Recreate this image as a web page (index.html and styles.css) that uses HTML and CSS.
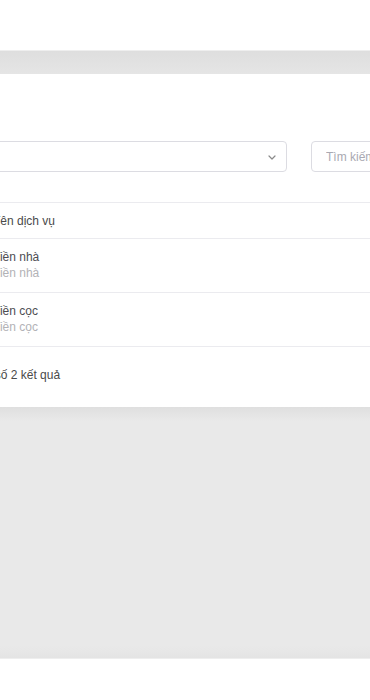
FILE: index.html
```html
<!DOCTYPE html>
<html lang="vi">
<head>
<meta charset="utf-8">
<link rel="stylesheet" href="styles.css">
</head>
<body>
<div class="viewport">
  <header class="topbar"></header>
  <div class="band"></div>
  <main class="canvas">
    <section class="card">
      <div class="filters">
        <div class="select">
          <svg class="chev" width="8" height="5" viewBox="0 0 8 5"><polyline points="1,1 4,4 7,1" fill="none" stroke="#8a8a8a" stroke-width="1.2" stroke-linecap="round" stroke-linejoin="round"/></svg>
        </div>
        <input class="search" type="text" placeholder="Tìm kiếm">
      </div>
      <div class="table">
        <div class="row head"><span class="cell">Tên dịch vụ</span></div>
        <div class="row item"><div class="cell"><div class="name">Tiền nhà</div><div class="desc">Tiền nhà</div></div></div>
        <div class="row item"><div class="cell"><div class="name">Tiền cọc</div><div class="desc">Tiền cọc</div></div></div>
        <div class="row foot"><span class="total">Tổng số 2 kết quả</span></div>
      </div>
    </section>
  </main>
  <div class="empty"></div>
  <footer class="bottom"></footer>
</div>
</body>
</html>
```

FILE: styles.css
```css
html, body {
  margin: 0;
  padding: 0;
  background: #ffffff;
}
body {
  font-family: "Liberation Sans", Arial, sans-serif;
  font-size: 12px;
  color: #4a4a4a;
  width: 370px;
  height: 700px;
  overflow: hidden;
}
.viewport {
  width: 370px;
  height: 700px;
  overflow: hidden;
  display: flex;
  flex-direction: column;
}
.topbar {
  height: 50px;
  flex: none;
  background: #ffffff;
}
.band {
  height: 23px;
  flex: none;
  border-top: 1px solid #eeeeee;
  background: linear-gradient(#dedede, #e5e5e5);
}
.canvas {
  flex: none;
  width: 800px;
  margin-left: -200px;
}
.card {
  background: #ffffff;
  height: 333px;
  display: flex;
  flex-direction: column;
}
.filters {
  display: flex;
  gap: 24px;
  padding: 67px 0 0 100px;
  margin-bottom: 30px;
}
.select {
  width: 375px;
  height: 29px;
  border: 1px solid #dcdce2;
  border-radius: 4px;
  display: flex;
  align-items: center;
  justify-content: flex-end;
  padding-right: 10px;
  box-sizing: content-box;
}
.chev {
  display: block;
  margin-top: 1px;
}
.search {
  width: 240px;
  height: 31px;
  box-sizing: border-box;
  border: 1px solid #dcdce2;
  border-radius: 4px;
  padding: 0 0 0 14px;
  font-family: "Liberation Sans", Arial, sans-serif;
  font-size: 12px;
  color: #4a4a4a;
  outline: none;
  background: #ffffff;
}
.search::placeholder {
  color: #a9a9b2;
}
.row {
  border-top: 1px solid #ebebef;
  display: flex;
  align-items: center;
}
.cell {
  padding-left: 193px;
}
.head {
  height: 35px;
}
.item {
  height: 53px;
  align-items: flex-start;
}
.item .cell {
  padding-top: 10px;
}
.name {
  line-height: 16px;
  color: #4d4d52;
}
.desc {
  line-height: 16px;
  color: #b2b2b6;
}
.foot {
  flex: 1;
  align-items: flex-start;
}
.total {
  padding-left: 164px;
  padding-top: 20px;
  line-height: 16px;
}
.empty {
  flex: none;
  height: 251px;
  background: linear-gradient(#dfdfdf, #e9e9e9 14px, #e9e9e9 calc(100% - 12px), #e4e4e4);
}
.bottom {
  flex: 1;
  border-top: 1px solid #eeeeee;
  background: #ffffff;
}
```
